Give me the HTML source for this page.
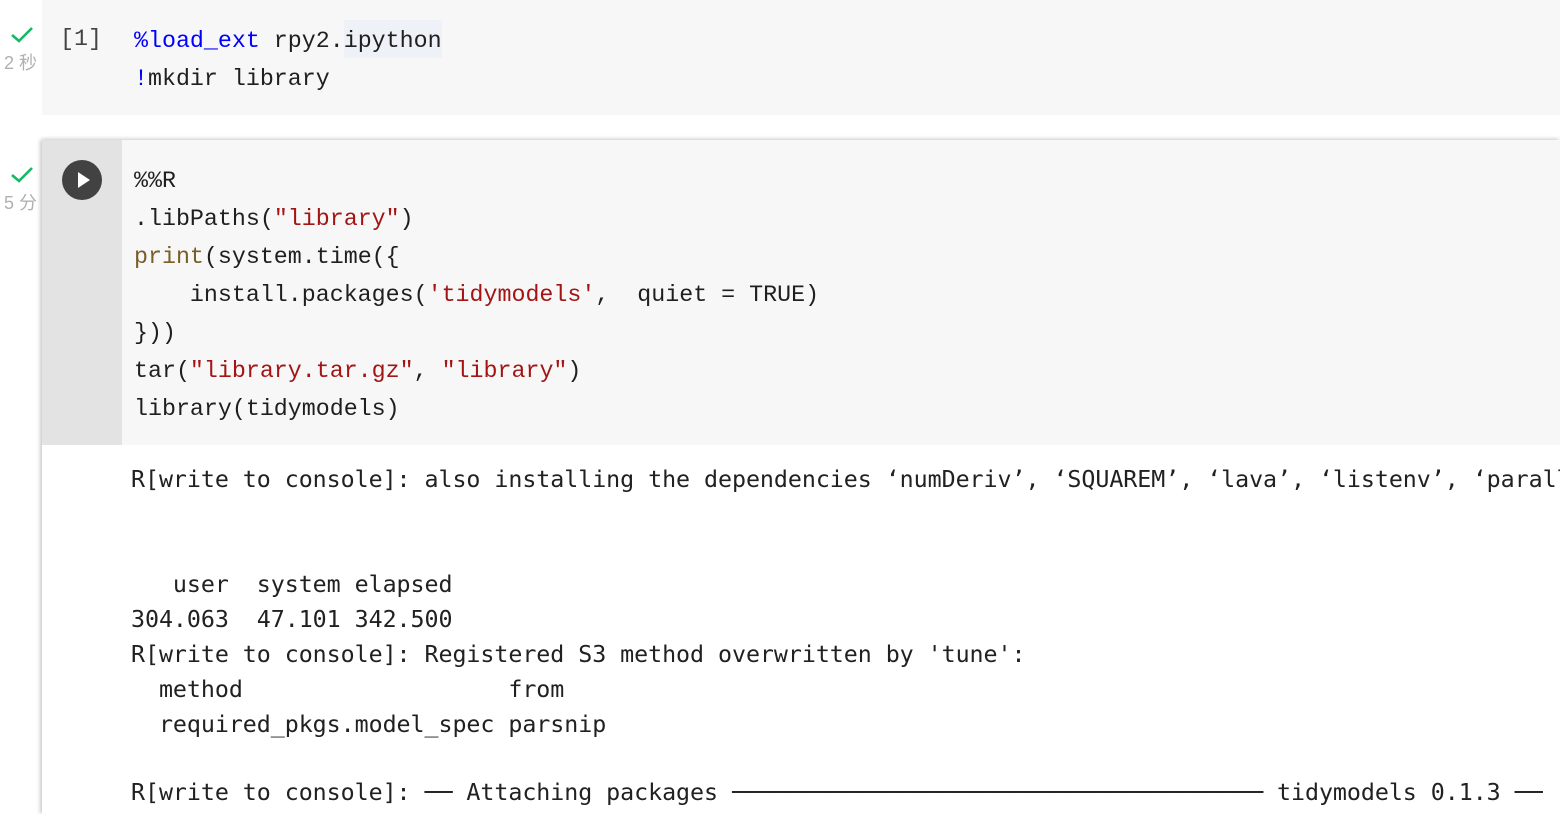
<!DOCTYPE html>
<html><head><style>
body{margin:0;width:1560px;height:814px;background:#fff;overflow:hidden;position:relative;font-family:"Liberation Mono",monospace;}
.abs{position:absolute}
.code{font-size:23.3px;line-height:38px;color:#1f1f1f;white-space:pre}
.out{font-size:23.3px;line-height:35px;color:#212121;white-space:pre;font-family:"DejaVu Sans Mono","Liberation Mono",monospace;letter-spacing:-0.05px}
.kw{color:#0000ff}.str{color:#a31515}.fn{color:#795e26}
.t{color:#b0b0b0;font-family:"Liberation Sans","Noto Sans CJK SC",sans-serif;font-size:18px}
</style></head><body>
<div class="abs" style="left:42px;top:0;width:1518px;height:115px;background:#f7f7f7"></div>
<svg class="abs" style="left:10px;top:26px" width="24" height="18"><path d="M2 9 L9 15 L22 2" stroke="#14b866" stroke-width="2.6" fill="none"/></svg>
<div class="abs t" style="left:4px;top:49px">2 秒</div>
<div class="abs code" style="left:60px;top:20px;color:#444">[1]</div>
<div class="abs" style="left:344px;top:20px;width:98px;height:38px;background:#eef1f7"></div>
<div class="abs code" style="left:134px;top:22px"><span class="kw">%load_ext</span> rpy2.ipython
<span class="kw">!</span>mkdir library</div>

<div class="abs" style="left:42px;top:140px;width:1518px;height:674px;box-shadow:-2px 0 4px rgba(0,0,0,.18),0 -2px 4px rgba(0,0,0,.08)"></div>
<div class="abs" style="left:42px;top:140px;width:1518px;height:305px;background:#f7f7f7"></div>
<div class="abs" style="left:42px;top:140px;width:80px;height:305px;background:#e3e3e3"></div>
<div class="abs" style="left:42px;top:445px;width:1518px;height:369px;background:#fff"></div>
<svg class="abs" style="left:62px;top:160px" width="40" height="40"><circle cx="20" cy="20" r="20" fill="#424242"/><path d="M16 12 L28 20 L16 28 Z" fill="#fff"/></svg>
<svg class="abs" style="left:10px;top:166px" width="24" height="18"><path d="M2 9 L9 15 L22 2" stroke="#14b866" stroke-width="2.6" fill="none"/></svg>
<div class="abs t" style="left:4px;top:189px">5 分</div>
<div class="abs code" style="left:134px;top:162px">%%R
.libPaths(<span class="str">"library"</span>)
<span class="fn">print</span>(system.time({
    install.packages(<span class="str">'tidymodels'</span>,  quiet = TRUE)
}))
tar(<span class="str">"library.tar.gz"</span>, <span class="str">"library"</span>)
library(tidymodels)</div>

<div class="abs" style="left:131px;top:462px;width:1429px;height:352px;overflow:hidden">
<div class="abs out" style="left:0;top:0">R[write to console]: also installing the dependencies ‘numDeriv’, ‘SQUAREM’, ‘lava’, ‘listenv’, ‘parallelly’</div>
<div class="abs out" style="left:0;top:105px">   user  system elapsed
304.063  47.101 342.500 
R[write to console]: Registered S3 method overwritten by 'tune':
  method                   from   
  required_pkgs.model_spec parsnip
</div>
<div class="abs out" style="left:0;top:313px">R[write to console]: ── Attaching packages ────────────────────────────────────── tidymodels 0.1.3 ──</div>
</div>
</body></html>
